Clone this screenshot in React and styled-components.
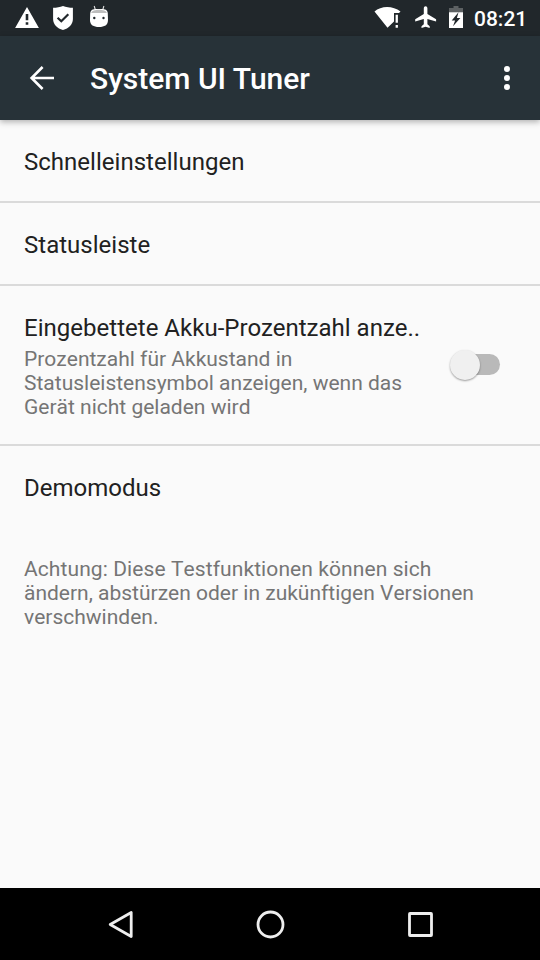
import styled, { createGlobalStyle } from 'styled-components';

const GlobalStyle = createGlobalStyle`
    body {
        margin: 0;
        background: #fafafa;
        font-family: Roboto, sans-serif;
    }
`;

const Screen = styled.div`
    display: flex;
    flex-direction: column;
    width: 540px;
    height: 960px;
    overflow: hidden;
    background: #fafafa;
`;

const StatusBar = styled.header`
    display: flex;
    flex: none;
    justify-content: space-between;
    height: 36px;
    background: #21272b;
    color: #fff;
`;

const Notifications = styled.div`
    display: flex;
    padding-left: 9px;
`;

const SystemIcons = styled.div`
    display: flex;
    padding-right: 13px;
`;

const Icon = styled.svg`
    display: block;
    flex: none;
    fill: currentColor;
`;

const Clock = styled.span`
    margin-left: 5px;
    width: 53px;
    font-size: 21px;
    font-weight: 500;
    line-height: 38px;
    white-space: nowrap;
`;

const Toolbar = styled.div`
    display: flex;
    flex: none;
    align-items: center;
    position: relative;
    height: 84px;
    background: #273238;
    color: #fff;
    box-shadow: 0 2px 6px rgba(0, 0, 0, 0.3);
`;

const IconButton = styled.button`
    display: flex;
    align-items: center;
    justify-content: center;
    width: ${(props) => props.$width}px;
    height: 84px;
    padding: 0;
    border: 0;
    background: none;
    color: inherit;
`;

const Title = styled.h1`
    flex: 1;
    margin: 0 0 0 6px;
    padding-top: 2px;
    font-size: 30px;
    font-weight: 500;
    line-height: 36px;
    white-space: nowrap;
`;

const List = styled.main`
    flex: 1;
`;

const Row = styled.div`
    display: flex;
    box-sizing: border-box;
    height: ${(props) => props.$height}px;
    padding: 28px 40px 0 24px;
    border-bottom: ${(props) => (props.$divider ? '2px solid #dadada' : '0')};
`;

const RowText = styled.div`
    flex: 1;
`;

const RowTitle = styled.div`
    font-size: 24px;
    line-height: 28px;
    letter-spacing: 0.02px;
    color: #212121;
    white-space: nowrap;
`;

const Summary = styled.p`
    margin: 0;
    font-size: 21px;
    font-kerning: none;
    line-height: 24px;
    color: #757575;
    white-space: pre-line;
`;

const RowSummary = styled(Summary)`
    margin-top: 5px;
`;

const Warning = styled(Summary)`
    padding: 29px 24px 0;

    &::first-line {
        letter-spacing: 0.09px;
    }
`;

const Switch = styled.button`
    display: flex;
    align-items: center;
    align-self: flex-start;
    width: 36px;
    height: 21px;
    margin-top: 40px;
    padding: 0;
    border: 0;
    border-radius: 11px;
    background: #b9b9b9;
`;

const Thumb = styled.span`
    flex: none;
    width: 30px;
    height: 30px;
    margin-left: -14.5px;
    border-radius: 50%;
    background: #f0f0f0;
    box-shadow: 0 1px 2px rgba(0, 0, 0, 0.38);
`;

const NavBar = styled.nav`
    display: flex;
    flex: none;
    justify-content: center;
    height: 72px;
    background: #000;
    color: #eee;
`;

const NavButton = styled(IconButton)`
    height: 74px;
`;

function StatusIcons() {
    return (
        <StatusBar>
            <Notifications>
                <Icon width="36" height="36" viewBox="0 0 36 36">
                    <path
                        fillRule="evenodd"
                        d="M18 7 29.900 28H6.100ZM16.700 14v6.300h2.600V14Zm0 8.200v2.500h2.600v-2.500Z"
                    />
                </Icon>
                <Icon width="36" height="36" viewBox="0 0 36 36">
                    <path d="M18 6c3 1.300 6.300 1.700 9.900 1.800V19c0 5.500-4.200 9.500-9.900 11-5.700-1.500-9.900-5.500-9.900-11V7.800C11.700 7.700 15 7.300 18 6Z" />
                    <path d="m12.600 17.700 3.700 3.500 7-7" fill="none" stroke="#21272b" strokeWidth="2.200" />
                </Icon>
                <Icon width="36" height="36" viewBox="0 0 36 36">
                    <path d="m13.200 6 1.200 4M22.900 6l-1.200 4" stroke="#ddd" strokeWidth="1.100" />
                    <path d="M9.200 13.500C9.500 9 13 9 18 9s8.500 0 8.800 4.500l.2 6.500c0 5-3.500 7-9 7s-9-2-9-7Z" />
                    <path d="M10.200 13c.8-4.300 14.800-4.300 15.600 0Z" fill="#bdbdbd" />
                    <circle cx="13.300" cy="18" r="1.200" fill="#21272b" />
                    <circle cx="22.500" cy="18" r="1.200" fill="#21272b" />
                </Icon>
            </Notifications>
            <SystemIcons>
                <Icon width="32" height="36" viewBox="0 0 32 36">
                    <path d="M3.500 11.400C10 5.400 22 5.400 29.500 11.400L28 13.100H23V21.500L16.500 27.800Z" />
                    <path d="M24.600 14.800h2.300v8h-2.300zm0 10.200h2.300v2.700h-2.300z" />
                </Icon>
                <Icon width="40" height="36" viewBox="0 0 40 36">
                    <path d="M33.100 21.600v-2.300l-8.700-5.300V8.200C24.400 7 23.600 6.200 22.600 6.200S20.800 7 20.800 8.200V14l-8.600 5.300v2.300l8.600-2.700v5.400l-2.300 1.900V28l4.100-1.200 4.100 1.200v-1.800l-2.300-1.900v-5.400Z" />
                </Icon>
                <Icon width="26" height="36" viewBox="0 0 26 36">
                    <path d="M6 12.500V8h4.500V6.100h5V8H20v4.500Z" fill="#5d6163" />
                    <path
                        fillRule="evenodd"
                        d="M6 12.300h14V28H6Zm9.500 0-6.800 8.200h3.400l-2.100 5.800 7.400-8.300h-3.500Z"
                    />
                </Icon>
                <Clock>08:21</Clock>
            </SystemIcons>
        </StatusBar>
    );
}

function App() {
    return (
        <Screen>
            <GlobalStyle />
            <StatusIcons />
            <Toolbar>
                <IconButton $width={84} aria-label="Zurück">
                    <Icon width="26" height="26" viewBox="0 0 26 26">
                        <path
                            d="M25 13H3M13.600 2 2.600 13l11 11"
                            fill="none"
                            stroke="currentColor"
                            strokeWidth="2.600"
                        />
                    </Icon>
                </IconButton>
                <Title>System UI Tuner</Title>
                <IconButton $width={66} aria-label="Mehr">
                    <Icon width="6" height="24" viewBox="0 0 6 24">
                        <circle cx="3" cy="3" r="3" />
                        <circle cx="3" cy="12" r="3" />
                        <circle cx="3" cy="21" r="3" />
                    </Icon>
                </IconButton>
            </Toolbar>
            <List>
                <Row $height={83} $divider>
                    <RowTitle>Schnelleinstellungen</RowTitle>
                </Row>
                <Row $height={83} $divider>
                    <RowTitle>Statusleiste</RowTitle>
                </Row>
                <Row $height={160} $divider>
                    <RowText>
                        <RowTitle>Eingebettete Akku-Prozentzahl anze..</RowTitle>
                        <RowSummary>
                            {'Prozentzahl für Akkustand in\nStatusleistensymbol anzeigen, wenn das\nGerät nicht geladen wird'}
                        </RowSummary>
                    </RowText>
                    <Switch role="switch" aria-checked="false">
                        <Thumb />
                    </Switch>
                </Row>
                <Row $height={82}>
                    <RowTitle>Demomodus</RowTitle>
                </Row>
                <Warning>
                    {'Achtung: Diese Testfunktionen können sich\nändern, abstürzen oder in zukünftigen Versionen\nverschwinden.'}
                </Warning>
            </List>
            <NavBar>
                <NavButton $width={150} aria-label="Zurück">
                    <Icon width="30" height="30" viewBox="0 0 30 30">
                        <path
                            d="M26.200 2.500v24L5.200 14.500Z"
                            fill="none"
                            stroke="currentColor"
                            strokeWidth="2.800"
                            strokeLinejoin="round"
                        />
                    </Icon>
                </NavButton>
                <NavButton $width={150} aria-label="Startseite">
                    <Icon width="30" height="30" viewBox="0 0 30 30">
                        <circle cx="15.500" cy="14.500" r="12.500" fill="none" stroke="currentColor" strokeWidth="2.800" />
                    </Icon>
                </NavButton>
                <NavButton $width={150} aria-label="Übersicht">
                    <Icon width="30" height="30" viewBox="0 0 30 30">
                        <rect
                            x="4.500"
                            y="3.500"
                            width="22"
                            height="22"
                            rx="0.500"
                            fill="none"
                            stroke="currentColor"
                            strokeWidth="2.800"
                        />
                    </Icon>
                </NavButton>
            </NavBar>
        </Screen>
    );
}

export default App;
